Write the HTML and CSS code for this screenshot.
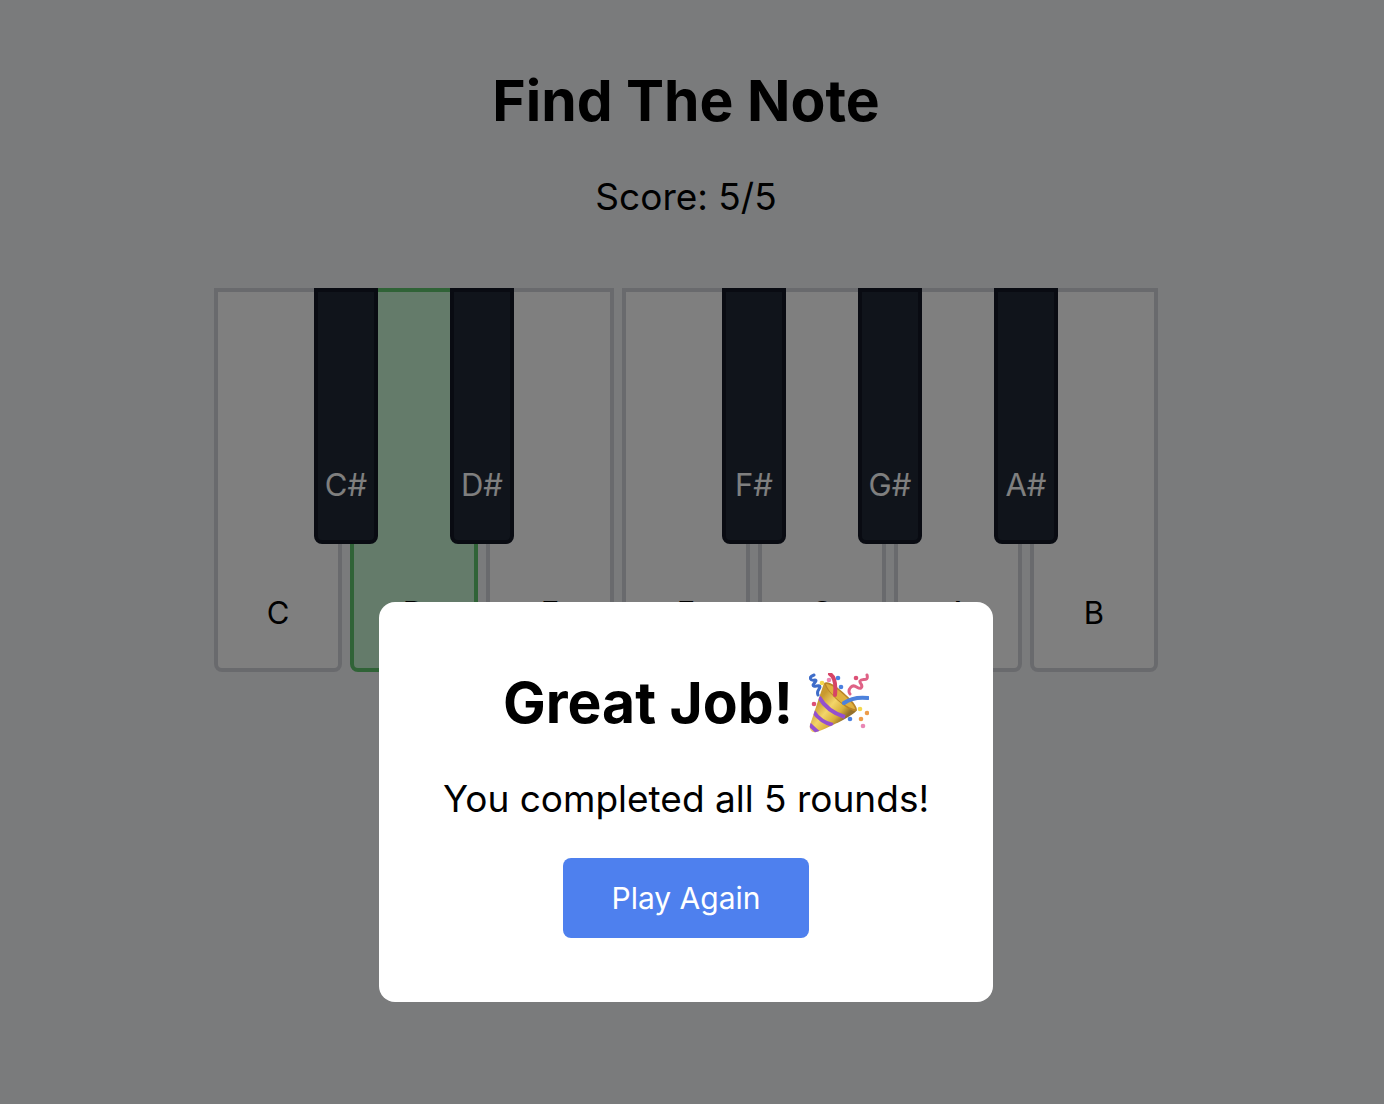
FILE: index.html
```html
<!DOCTYPE html>
<html lang="en">
<head>
<meta charset="utf-8">
<meta name="viewport" content="width=device-width, initial-scale=1">
<title>Find The Note</title>
<link rel="stylesheet" href="styles.css">
</head>
<body>
<main class="game">
  <h1 class="title">Find The Note</h1>
  <p class="text score">Score: 5/5</p>
  <div class="piano">
    <div class="slot"><button class="key white" type="button">C</button><button class="key black" type="button">C#</button></div>
    <div class="slot"><button class="key white correct" type="button">D</button><button class="key black" type="button">D#</button></div>
    <div class="slot"><button class="key white" type="button">E</button></div>
    <div class="slot"><button class="key white" type="button">F</button><button class="key black" type="button">F#</button></div>
    <div class="slot"><button class="key white" type="button">G</button><button class="key black" type="button">G#</button></div>
    <div class="slot"><button class="key white" type="button">A</button><button class="key black" type="button">A#</button></div>
    <div class="slot"><button class="key white" type="button">B</button></div>
  </div>
</main>
<div class="overlay">
  <section class="dialog" role="dialog" aria-modal="true" aria-labelledby="result">
    <h2 class="title result" id="result">Great Job!
      <svg class="popper" viewBox="0 0 60 60" aria-hidden="true">
        <defs>
          <linearGradient id="gold" gradientUnits="userSpaceOnUse" x1="8" y1="30" x2="32" y2="50">
            <stop offset="0" stop-color="#c99a30"/>
            <stop offset="0.4" stop-color="#f3d569"/>
            <stop offset="0.75" stop-color="#d9b03a"/>
            <stop offset="1" stop-color="#94702a"/>
          </linearGradient>
          <clipPath id="cone"><path d="M15 10 L48 37 C46 42 15 57 7 59 C3 60 0 57 1 52 Z"/></clipPath>
        </defs>
        <path d="M15 10 L48 37 C46 42 15 57 7 59 C3 60 0 57 1 52 Z" fill="url(#gold)"/>
        <g clip-path="url(#cone)" fill="none" stroke="#9450cf" stroke-width="4">
          <path d="M10 24 C15 33 23 40 36 44"/>
          <path d="M4 38 C8 44 15 50 24 52"/>
          <path d="M0 51 C3 54 6 57 10 60"/>
        </g>
        <path d="M15 10 C19 7 29 14 37 22 C45 29 50 36 47 38 C41 40 18 20 15 10Z" fill="#b98427"/>
        <path d="M17 11 C22 11 31 18 37 24 C43 30 46 34 46 36 C37 35 20 21 17 11Z" fill="#dfb03e"/>
        <g fill="none" stroke-linecap="round" stroke-linejoin="round">
          <path d="M5 2 C-1 4 1 8 6 7 C9 7 4 11 4 12 C4 15 11 11 11 14 C11 16 7 18 9 22" stroke="#3f6dc9" stroke-width="3"/>
          <path d="M21 1 C26 4 27 12 26 22" stroke="#d64466" stroke-width="4"/>
          <path d="M58 2 C60 9 53 5 51 8 C50 10 55 12 52 15 C49 17 46 10 42 14 C39 17 40 20 41 21" stroke="#df6286" stroke-width="3"/>
          <path d="M35 30 C42 25 50 24 59 25" stroke="#4d82dc" stroke-width="4"/>
        </g>
        <g fill="#4a7fe0"><circle cx="29" cy="5" r="2.3"/><circle cx="32" cy="14" r="2.3"/><circle cx="41" cy="46" r="2.3"/></g>
        <g fill="#e987b5"><circle cx="20" cy="7" r="2.3"/><circle cx="54" cy="53" r="2.3"/></g>
        <g fill="#dc5076"><circle cx="5" cy="31" r="2.3"/><circle cx="47" cy="5" r="2.3"/></g>
        <g fill="#f4d84f"><circle cx="13" cy="10" r="2.3"/><circle cx="51" cy="36" r="2.3"/></g>
        <g fill="#ed9c4a"><circle cx="58" cy="40" r="2.3"/><circle cx="52" cy="46" r="2.3"/></g>
      </svg>
    </h2>
    <p class="text">You completed all 5 rounds!</p>
    <button class="again" type="button">Play Again</button>
  </section>
</div>
</body>
</html>
```

FILE: styles.css
```css
* {
  box-sizing: border-box;
}

body {
  margin: 0;
  background: #f4f6f8;
  color: #000;
  font-family: Inter, "Liberation Sans", sans-serif;
}

h1, h2, p {
  margin: 0;
}

button {
  font: inherit;
  line-height: 48px;
}

.game {
  display: flex;
  flex-direction: column;
  align-items: center;
  gap: 32px;
  padding: 64px 12px 64px 0;
}

.title {
  padding-top: 2px;
  font-size: 57px;
  line-height: 70px;
  font-weight: 700;
}

.text {
  padding-top: 2px;
  font-size: 37px;
  line-height: 54px;
}

.score {
  margin-bottom: 32px;
}

.piano {
  display: flex;
  gap: 8px;
}

.slot {
  position: relative;
}

.key {
  display: flex;
  align-items: flex-end;
  justify-content: center;
  padding: 0 0 31px;
  border: 4px solid;
  border-radius: 0 0 8px 8px;
  font-size: 31px;
}

.white {
  width: 128px;
  height: 384px;
  background: #fff;
  border-color: #d3d4da;
  color: #000;
}

.correct {
  background: #c8f6d5;
  border-color: #60c66e;
}

/* Sharps straddle the gap between two white keys */
.black {
  position: absolute;
  top: 0;
  right: -36px;
  z-index: 1;
  width: 64px;
  height: 256px;
  background: #202937;
  border-color: #121724;
  color: #fff;
}

.overlay {
  position: fixed;
  inset: 0;
  z-index: 2;
  display: flex;
  align-items: flex-start;
  justify-content: center;
  padding: 602px 12px 0 0;
  background: rgba(0, 0, 0, 0.5);
}

.dialog {
  display: flex;
  flex-direction: column;
  align-items: center;
  gap: 32px;
  width: 614px;
  max-width: 100%;
  padding: 64px 32px;
  border-radius: 16px;
  background: #fff;
  text-align: center;
}

.result {
  display: flex;
  align-items: center;
  gap: 16px;
}

.popper {
  width: 60px;
  height: 60px;
}

.again {
  padding: 16px 48px;
  border: 0;
  border-radius: 8px;
  background: #4e80ee;
  color: #fff;
  font-size: 30px;
}
```
